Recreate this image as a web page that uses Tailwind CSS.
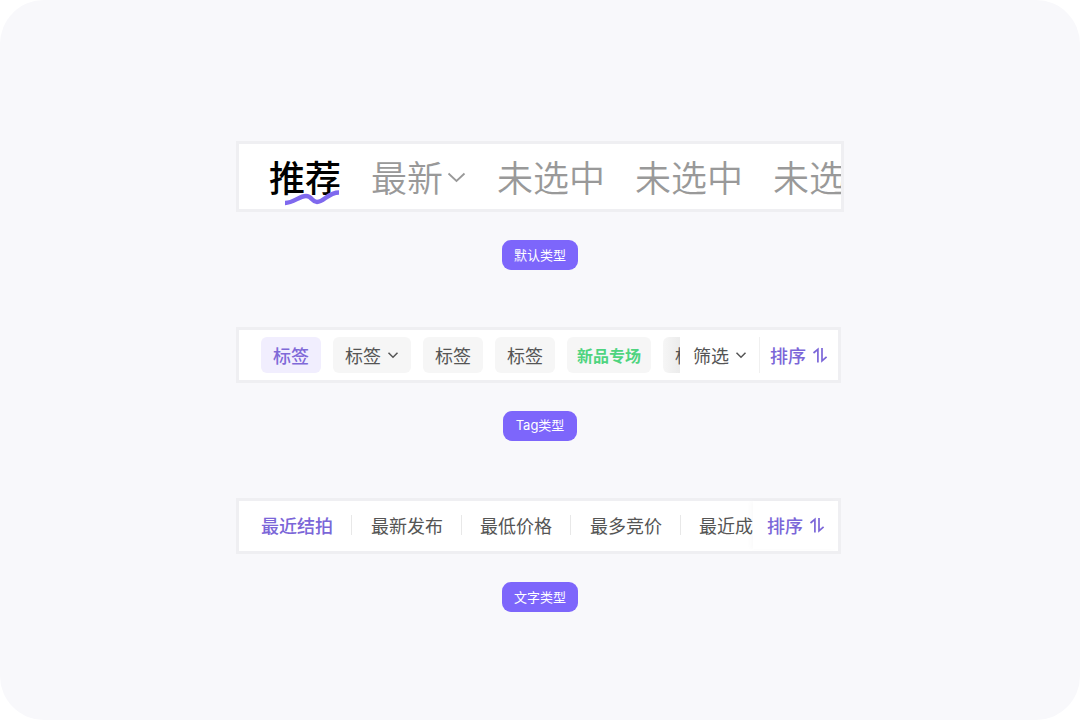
<!DOCTYPE html>
<html lang="zh-CN">
<head>
    <meta charset="UTF-8">
    <meta name="viewport" content="width=device-width, initial-scale=1.0">
    <title>标签栏 - 类型</title>
    <script src="https://cdn.jsdelivr.net/npm/@tailwindcss/browser@4"></script>
</head>
<body class="bg-white font-['Noto_Sans_CJK_SC',sans-serif]">

    <main class="min-h-screen pt-[141px] pb-12 rounded-[44px] bg-[#f8f8fb]">
        <div class="flex flex-col gap-[57px] w-full max-w-[608px] mx-auto">

            <!-- Default tabs -->
            <section class="flex flex-col gap-7">
                <nav class="border-3 border-[#efeff2] bg-white overflow-hidden">
                    <div class="flex items-center gap-[30px] h-[65px] pb-[2px] pl-[30px] text-4xl leading-[54px] font-[350] text-[#999999] whitespace-nowrap">
                        <button class="relative shrink-0 font-medium text-black">
                            推荐
                            <svg class="absolute left-4 -bottom-[3px] w-14 h-4" viewBox="0 0 56 16" fill="none" stroke="#7f69ee" stroke-width="4.4">
                                <path d="M0 13C9 13 14 6 21 6C27 6 27 12 32 12C39 12 43 2.5 54 2.5"/>
                            </svg>
                        </button>
                        <button class="flex items-center gap-1 shrink-0">
                            最新
                            <svg class="w-5 h-5" viewBox="0 0 20 20" fill="none" stroke="currentColor" stroke-width="1.8">
                                <path d="M1.5 7.5L9.5 15L17.5 7.5"/>
                            </svg>
                        </button>
                        <button class="shrink-0">未选中</button>
                        <button class="shrink-0">未选中</button>
                        <button class="shrink-0">未选中</button>
                    </div>
                </nav>
                <span class="self-center h-[30px] px-3 rounded-[9px] bg-[#7d66fb] text-[13px] leading-[29px] text-white">默认类型</span>
            </section>

            <!-- Tag tabs -->
            <section class="flex flex-col gap-7">
                <nav class="flex h-14 mr-[3px] border-3 border-[#efeff2] bg-white">
                    <div class="flex flex-1 min-w-0 items-center gap-3 pl-[22px] overflow-hidden text-lg leading-9 text-[#555555] whitespace-nowrap">
                        <button class="shrink-0 px-3 rounded-md bg-[#f1eefe] font-medium text-[#7f69d8]">标签</button>
                        <button class="flex items-center gap-[6px] shrink-0 px-3 rounded-md bg-[#f6f6f6]">
                            标签
                            <svg class="w-3 h-3" viewBox="0 0 12 12" fill="none" stroke="currentColor" stroke-width="1.5">
                                <path d="M1.5 3.8L6 8.3L10.5 3.8"/>
                            </svg>
                        </button>
                        <button class="shrink-0 px-3 rounded-md bg-[#f6f6f6]">标签</button>
                        <button class="shrink-0 px-3 rounded-md bg-[#f6f6f6]">标签</button>
                        <button class="shrink-0 px-[10px] rounded-md bg-[#f6f6f6] text-base leading-9 font-bold text-[#4fd47f]">新品专场</button>
                        <button class="shrink-0 px-3 rounded-md bg-linear-to-r from-[#f6f6f6] from-0% to-[#ebebeb] to-30%">标签</button>
                    </div>
                    <div class="flex items-center shrink-0 pl-[13px] pr-[10px] text-lg leading-9 text-[#555555]">
                        <button class="flex items-center gap-[6px] pr-3">
                            筛选
                            <svg class="w-3 h-3" viewBox="0 0 12 12" fill="none" stroke="currentColor" stroke-width="1.5">
                                <path d="M1.5 3.8L6 8.3L10.5 3.8"/>
                            </svg>
                        </button>
                        <button class="flex items-center gap-[6px] h-9 pl-[10px] border-l border-[#f0f0f0] font-medium text-[#7b66d8]">
                            排序
                            <svg class="w-4 h-[18px]" viewBox="0 0 16 18" fill="none" stroke="currentColor" stroke-width="1.7">
                                <path d="M1.5 7L5.9 3.4V16.5M10 2V14.8L14.6 10.8"/>
                            </svg>
                        </button>
                    </div>
                </nav>
                <span class="self-center h-[30px] px-[13px] rounded-[9px] bg-[#7d66fb] font-[Inter,'Noto_Sans_CJK_SC',sans-serif] text-[13px] leading-[29px] text-white">Tag类型</span>
            </section>

            <!-- Text tabs -->
            <section class="flex flex-col gap-7">
                <nav class="flex h-14 mr-[3px] pb-[2px] border-3 border-[#efeff2] bg-white">
                    <div class="flex flex-1 min-w-0 items-center pl-[22px] overflow-hidden text-lg leading-5 text-[#555555] whitespace-nowrap">
                        <button class="shrink-0 pr-[18px] font-medium text-[#7b66d8]">最近结拍</button>
                        <button class="shrink-0 pl-[19px] pr-[18px] border-l border-[#e8e8e8]">最新发布</button>
                        <button class="shrink-0 px-[18px] border-l border-[#e8e8e8]">最低价格</button>
                        <button class="shrink-0 pl-[19px] pr-[18px] border-l border-[#e8e8e8]">最多竞价</button>
                        <button class="shrink-0 px-[18px] border-l border-[#e8e8e8]">最近成交</button>
                    </div>
                    <div class="flex items-center shrink-0 pl-[14px] pr-[13px] text-lg leading-5 shadow-[-3px_0_4px_rgba(0,0,0,0.02)]">
                        <button class="flex items-center gap-[6px] font-medium text-[#7b66d8]">
                            排序
                            <svg class="w-4 h-[18px]" viewBox="0 0 16 18" fill="none" stroke="currentColor" stroke-width="1.7">
                                <path d="M1.5 7L5.9 3.4V16.5M10 2V14.8L14.6 10.8"/>
                            </svg>
                        </button>
                    </div>
                </nav>
                <span class="self-center h-[30px] px-3 rounded-[9px] bg-[#7d66fb] text-[13px] leading-[29px] text-white">文字类型</span>
            </section>

        </div>
    </main>

</body>
</html>
